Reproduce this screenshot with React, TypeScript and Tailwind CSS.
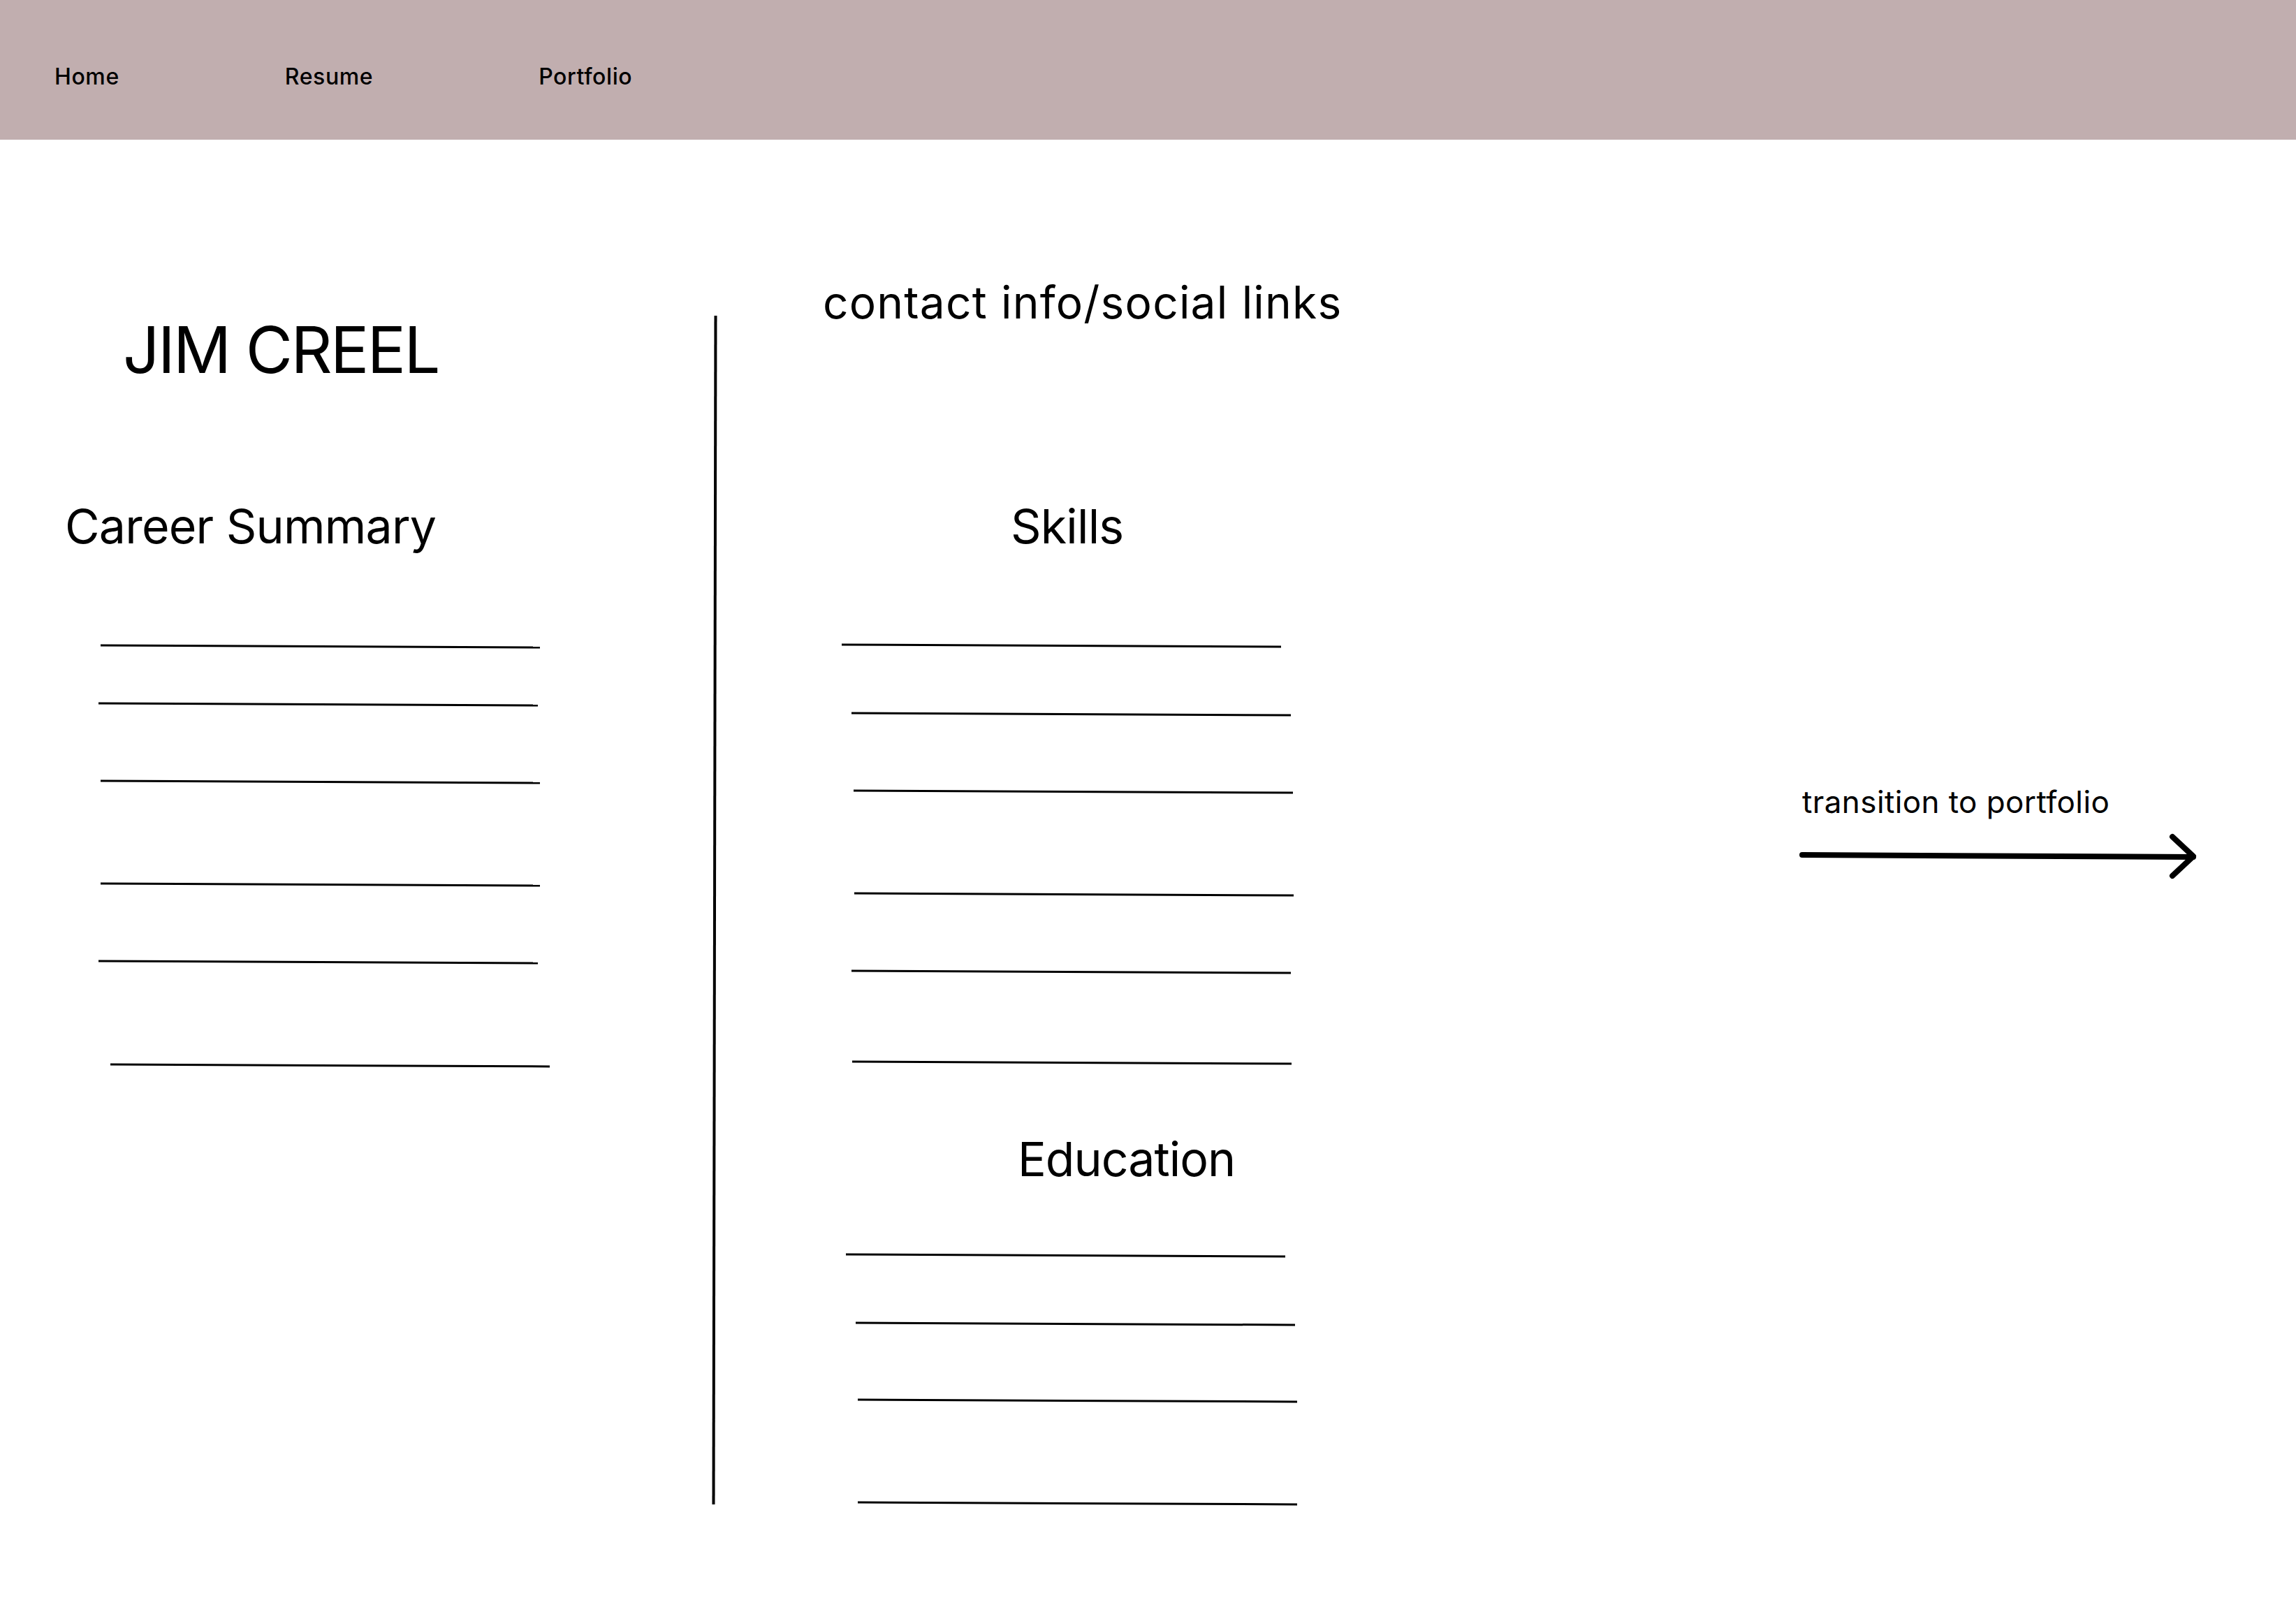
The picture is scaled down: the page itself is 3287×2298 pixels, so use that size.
import React from "react";

const navItems = ["Home", "Resume", "Portfolio"];

// each placeholder row: its offset from the previous block and its left indent
const summaryLines = [
  "mt-[137px] ml-[144px]",
  "mt-[80px] ml-[141px]",
  "mt-[108px] ml-[144px]",
  "mt-[144px] ml-[144px]",
  "mt-[108px] ml-[141px]",
  "mt-[145px] ml-[158px]",
];

const skillLines = [
  "mt-[136px] ml-[180px]",
  "mt-[95px] ml-[194px]",
  "mt-[108px] ml-[197px]",
  "mt-[144px] ml-[198px]",
  "mt-[108px] ml-[194px]",
  "mt-[127px] ml-[195px]",
];

const educationLines = [
  "mt-[103px] ml-[186px]",
  "mt-[95px] ml-[200px]",
  "mt-[107px] ml-[203px]",
  "mt-[144px] ml-[203px]",
];

function Rule({ className }: { className: string }) {
  return (
    <div className={`${className} h-[3px] w-[629px] bg-black rotate-[0.27deg]`} />
  );
}

export default function App() {
  return (
    <div className="min-h-screen w-full bg-white font-['Inter',sans-serif] text-black">
      <header className="flex h-[200px] items-start gap-[237px] bg-[#c1aeaf] pl-[78px] pt-[94px]">
        {navItems.map((item) => (
          <a key={item} className="text-[32px] font-medium leading-none tracking-[0.6px]">
            {item}
          </a>
        ))}
      </header>

      <main className="flex items-start">
        <section className="flex w-[1021px] flex-col items-start">
          <h1 className="ml-[176px] mt-[255px] text-[92px] leading-none tracking-[-2.6px]">
            JIM CREEL
          </h1>
          <h2 className="ml-[93px] mt-[172px] text-[68px] leading-none tracking-[-0.8px]">
            Career Summary
          </h2>
          {summaryLines.map((cls) => (
            <Rule key={cls} className={cls} />
          ))}
        </section>

        <div className="mt-[252px] h-[1702px] w-[4px] bg-black rotate-[0.1deg]" />

        <section className="flex w-[1552px] flex-col items-start">
          <p className="ml-[153px] mt-[201px] text-[64px] leading-none tracking-[1.2px]">
            contact info/social links
          </p>
          <h2 className="ml-[422px] mt-[254px] text-[68px] leading-none tracking-[-0.8px]">
            Skills
          </h2>
          {skillLines.map((cls) => (
            <Rule key={cls} className={cls} />
          ))}
          <h2 className="ml-[432px] mt-[102px] text-[68px] leading-none tracking-[-1px]">
            Education
          </h2>
          {educationLines.map((cls) => (
            <Rule key={cls} className={cls} />
          ))}
        </section>

        <section className="mt-[926px] flex flex-col items-start">
          <p className="ml-[3px] text-[44px] leading-none tracking-[0.4px]">
            transition to portfolio
          </p>
          <svg
            className="-ml-[1px] mt-[20px]"
            width="572"
            height="72"
            viewBox="0 0 572 72"
            fill="none"
            stroke="black"
            strokeWidth="8"
            strokeLinecap="round"
            strokeLinejoin="round"
          >
            <path d="M4 34 L564 37" />
            <path d="M534 8 L564 36 L534 64" />
          </svg>
        </section>
      </main>
    </div>
  );
}
